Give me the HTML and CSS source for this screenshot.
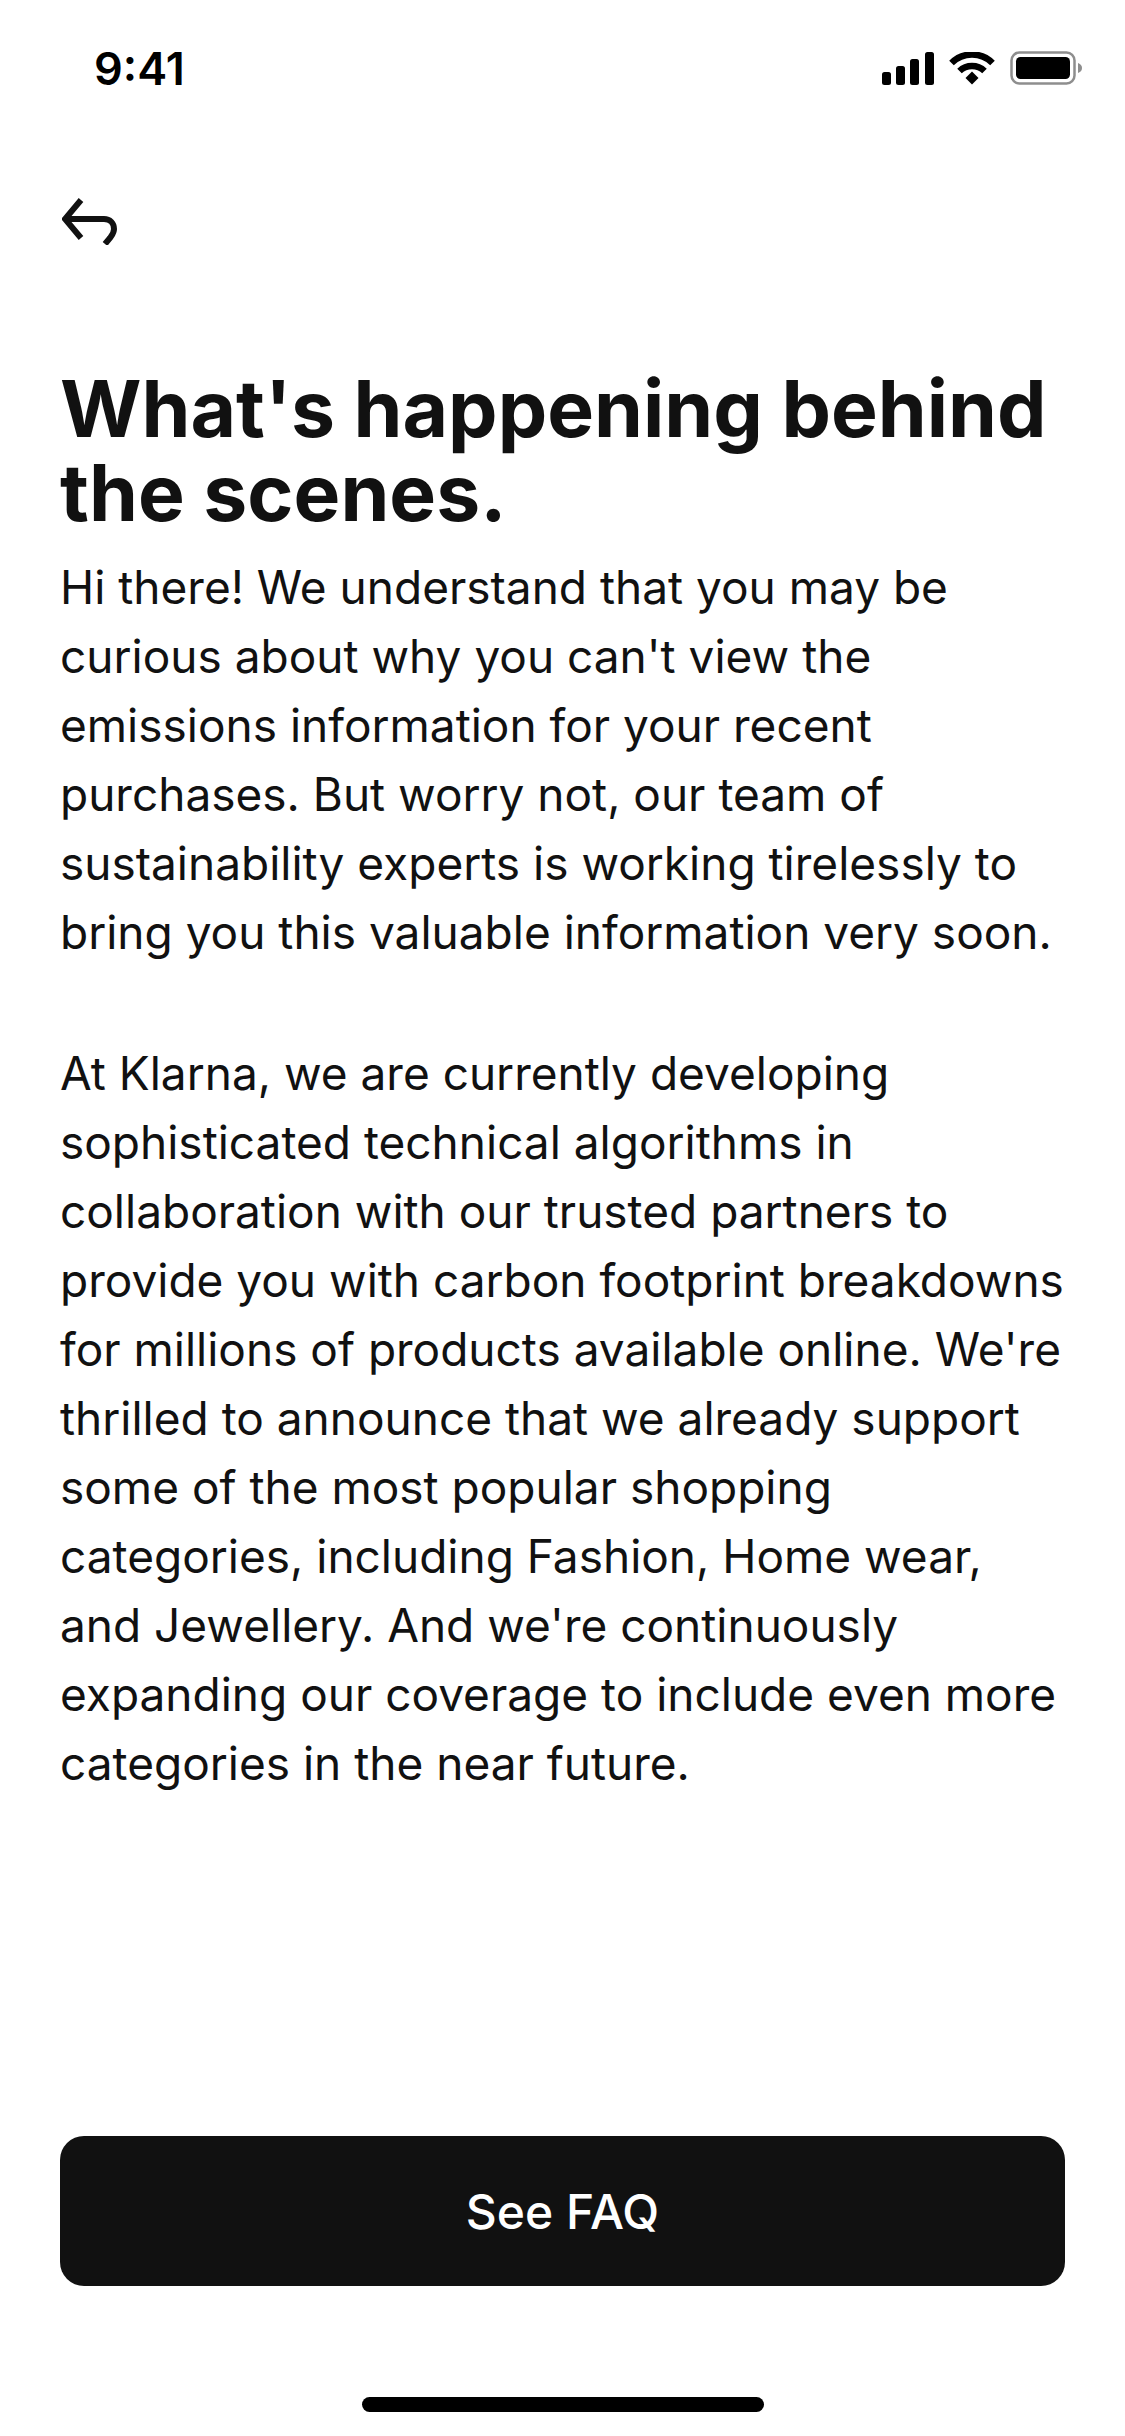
FILE: index.html
```html
<!DOCTYPE html>
<html lang="en">
<head>
    <meta charset="UTF-8">
    <meta name="viewport" content="width=device-width, initial-scale=1.0">
    <title>What's happening behind the scenes</title>
    <link rel="stylesheet" href="styles.css">
</head>
<body>
    <div class="screen">
        <div class="status-bar">
            <span class="status-time">9:41</span>
            <div class="status-icons">
                <svg class="icon-signal" width="52" height="33" viewBox="0 0 52 33">
                    <rect x="0" y="20" width="9" height="13" rx="2.5"/>
                    <rect x="14" y="14" width="9" height="19" rx="2.5"/>
                    <rect x="28" y="7" width="9" height="26" rx="2.5"/>
                    <rect x="43" y="0" width="9" height="33" rx="2.5"/>
                </svg>
                <svg class="icon-wifi" width="46" height="33" viewBox="0 0 46 33">
                    <path d="M2.5 11 A29 29 0 0 1 43.5 11" fill="none" stroke="#000" stroke-width="6.5"/>
                    <path d="M10.5 19 A18 18 0 0 1 35.5 19" fill="none" stroke="#000" stroke-width="6.5"/>
                    <path d="M16.5 26 L23 19.5 L29.5 26 L23 32.5 Z"/>
                </svg>
                <svg class="icon-battery" width="73" height="34" viewBox="0 0 73 34">
                    <rect x="1.5" y="1.5" width="63" height="31" rx="8" fill="none" stroke="#8e8e8e" stroke-width="2.5"/>
                    <rect x="6" y="6" width="54" height="22" rx="4.5"/>
                    <path d="M68 12 C71 13 72 15 72 17 C72 19 71 21 68 22 Z" fill="#8e8e8e"/>
                </svg>
            </div>
        </div>

        <button class="back-btn" aria-label="Back">
            <svg width="56" height="48" viewBox="0 0 56 48">
                <path d="M19 3 L3 22 L19 41 M3 22 H42 C48 22 52 26 52 32 C52 36 50 38 48 41 L43 47" fill="none" stroke="#111" stroke-width="6"/>
            </svg>
        </button>

        <main class="content">
            <h1>What's happening behind the scenes.</h1>
            <p>Hi there! We understand that you may be curious about why you can't view the emissions information for your recent purchases. But worry not, our team of sustainability experts is working tirelessly to bring you this valuable information very soon.</p>
            <p>At Klarna, we are currently developing sophisticated technical algorithms in collaboration with our trusted partners to provide you with carbon footprint breakdowns for millions of products available online. We're thrilled to announce that we already support some of the most popular shopping categories, including Fashion, Home wear, and Jewellery. And we're continuously expanding our coverage to include even more categories in the near future.</p>
        </main>

        <div class="footer">
            <button class="faq-btn">See FAQ</button>
        </div>
        <div class="home-bar"></div>
    </div>
</body>
</html>
```

FILE: styles.css
```css
* {
    box-sizing: border-box;
}
html, body {
    margin: 0;
    padding: 0;
    background: #fff;
}
body {
    font-family: Inter, "Liberation Sans", sans-serif;
    color: #111;
}
.screen {
    display: flex;
    flex-direction: column;
    width: 1125px;
    height: 2436px;
    overflow: hidden;
}
.status-bar {
    display: flex;
    justify-content: space-between;
    align-items: center;
    height: 136px;
    padding: 0 42px 0 94px;
}
.status-time {
    font-size: 45px;
    font-weight: 600;
    color: #000;
}
.status-icons {
    display: flex;
    align-items: center;
    gap: 15px;
}
.status-icons svg {
    display: block;
}
.back-btn {
    align-self: flex-start;
    display: block;
    margin: 61px 0 0 62px;
    padding: 0;
    height: 48px;
    border: none;
    background: none;
}
.back-btn svg {
    display: block;
}
.content {
    flex: 1;
    padding: 0 60px;
}
h1 {
    margin: 122px 0 0;
    font-size: 78.6px;
    line-height: 84px;
    font-weight: 700;
    color: #111;
}
p {
    margin: 0 0 72px;
    font-size: 46px;
    line-height: 69px;
    font-weight: 400;
}
h1 + p {
    margin-top: 18px;
}
.footer {
    padding: 0 60px;
}
.faq-btn {
    display: block;
    width: 100%;
    height: 150px;
    border: none;
    border-radius: 24px;
    background: #111;
    color: #fff;
    font-family: inherit;
    font-size: 48px;
    font-weight: 500;
}
.home-bar {
    flex-shrink: 0;
    width: 402px;
    height: 15px;
    margin: 111px auto 24px;
    border-radius: 8px;
    background: #000;
}
```
